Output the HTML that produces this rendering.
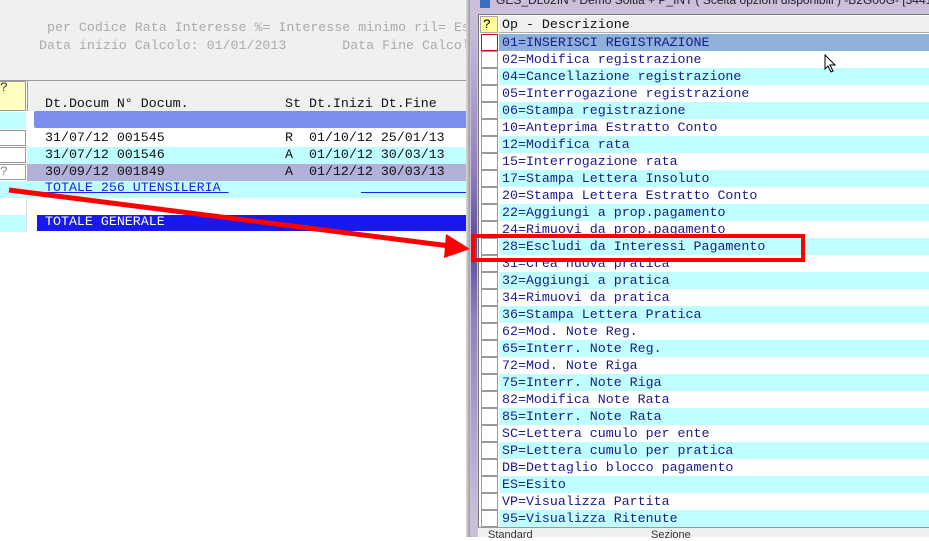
<!DOCTYPE html>
<html><head><meta charset="utf-8"><style>
*{margin:0;padding:0;box-sizing:border-box}
body{width:929px;height:537px;overflow:hidden;background:#fff;position:relative;font-family:"Liberation Mono",monospace;font-size:13.3px}
.a{position:absolute;white-space:pre}
.r{position:absolute;left:479px;width:450px;height:17px}
.r .cb{position:absolute;left:2px;top:0;width:17px;height:17px;background:#fff;border:1px solid #999}
.r .t{position:absolute;left:23px;top:0;line-height:17px;color:#1a1a90;white-space:pre}
.l{position:absolute;white-space:pre;line-height:17px;color:#111}
</style></head><body>
<div class="a" style="left:0;top:0;width:470px;height:80px;background:#f0f0f0"></div>
<div class="a" style="left:47px;top:20px;color:#aaa">per Codice Rata Interesse %= Interesse minimo ril= Es</div>
<div class="a" style="left:39px;top:38px;color:#aaa">Data inizio Calcolo: 01/01/2013       Data Fine Calcol</div>
<div class="a" style="left:0;top:80px;width:470px;height:1px;background:#999"></div>
<div class="a" style="left:0;top:81px;width:26px;height:30px;background:#ffffc0;border:1px solid #999;border-left:none;color:#333;line-height:12px">?</div>
<div class="a" style="left:27px;top:81px;width:443px;height:30px;background:#f0f0f0;border-left:1px solid #999"></div>
<div class="l" style="left:45px;top:95px">Dt.Docum N° Docum.</div>
<div class="l" style="left:285px;top:95px">St</div>
<div class="l" style="left:309px;top:95px">Dt.Inizi Dt.Fine</div>
<div class="a" style="left:0;top:112px;width:26px;height:17px;background:#c0ffff"></div>
<div class="a" style="left:34px;top:111px;width:436px;height:17px;background:#7b8ff0;border-radius:2px"></div>
<div class="a" style="left:27px;top:130px;width:443px;height:17px;background:#fff"></div>
<div class="a" style="left:0;top:130px;width:26px;height:16px;border:1px solid #999;border-left:none"></div>
<div class="l" style="left:45px;top:129px">31/07/12 001545</div>
<div class="l" style="left:285px;top:129px">R</div>
<div class="l" style="left:309px;top:129px">01/10/12 25/01/13</div>
<div class="a" style="left:27px;top:147px;width:443px;height:17px;background:#c0ffff"></div>
<div class="a" style="left:0;top:147px;width:26px;height:16px;border:1px solid #999;border-left:none"></div>
<div class="l" style="left:45px;top:146px">31/07/12 001546</div>
<div class="l" style="left:285px;top:146px">A</div>
<div class="l" style="left:309px;top:146px">01/10/12 30/03/13</div>
<div class="a" style="left:27px;top:164px;width:443px;height:17px;background:#b0b0d8"></div>
<div class="a" style="left:0;top:164px;width:26px;height:16px;border:1px solid #999;border-left:none;color:#888;line-height:14px">?</div>
<div class="l" style="left:45px;top:163px">30/09/12 001849</div>
<div class="l" style="left:285px;top:163px">A</div>
<div class="l" style="left:309px;top:163px">01/12/12 30/03/13</div>
<div class="a" style="left:0;top:181px;width:470px;height:17px;background:#c0ffff"></div>
<div class="l" style="left:45px;top:179px;color:#2020e0;text-decoration:underline">TOTALE 256 UTENSILERIA </div>
<div class="a" style="left:361px;top:192px;width:109px;height:1px;background:#2020e0"></div>
<div class="a" style="left:26px;top:198px;width:1px;height:34px;background:#ddd"></div>
<div class="a" style="left:0;top:215px;width:26px;height:17px;background:#c0ffff"></div>
<div class="a" style="left:37px;top:215px;width:433px;height:16px;background:#1818f0"></div>
<div class="l" style="left:45px;top:213px;color:#fff">TOTALE GENERALE</div>
<div class="a" style="left:466px;top:0;width:4px;height:537px;background:linear-gradient(90deg,#ddd,#999)"></div>
<div class="a" style="left:470px;top:0;width:459px;height:537px;background:#cbbfdc"></div>
<div class="a" style="left:471px;top:20px;width:6px;height:500px;background:linear-gradient(180deg,#cbbfdc,#9080c0 30%,#5a4a9a 45%,#9080c0 60%,#cbbfdc)"></div>
<div class="a" style="left:480px;top:-2px;width:10px;height:10px;background:#3a70c0"></div>
<div class="a" style="left:496px;top:-7px;font-family:'Liberation Sans',sans-serif;font-size:12px;color:#222">GES_DL02IN - Demo Soltia + P_INT ( Scelta opzioni disponibili ) -B2G00G- [3441</div>
<div class="a" style="left:478px;top:14px;width:451px;height:523px;background:#fff;border-left:1px solid #777;border-top:1px solid #777"></div>
<div class="a" style="left:480px;top:16px;width:18px;height:17px;background:#ffff99;border:1px solid #aaa;line-height:15px;padding-left:2px">?</div>
<div class="a" style="left:499px;top:16px;width:430px;height:17px;background:#f0f0f0;border-bottom:1px solid #aaa"></div>
<div class="l" style="left:502px;top:16px">Op - Descrizione</div>
<div id="rows"></div>
<div class="a" style="left:478px;top:527px;width:451px;height:10px;background:#f0f0f0;border-top:1px solid #999"></div>
<div class="a" style="left:488px;top:529px;font-family:'Liberation Sans',sans-serif;font-size:11px;color:#333">Standard</div>
<div class="a" style="left:651px;top:529px;font-family:'Liberation Sans',sans-serif;font-size:11px;color:#333">Sezione</div>
<script>
var items=["01=INSERISCI REGISTRAZIONE","02=Modifica registrazione","04=Cancellazione registrazione","05=Interrogazione registrazione","06=Stampa registrazione","10=Anteprima Estratto Conto","12=Modifica rata","15=Interrogazione rata","17=Stampa Lettera Insoluto","20=Stampa Lettera Estratto Conto","22=Aggiungi a prop.pagamento","24=Rimuovi da prop.pagamento","28=Escludi da Interessi Pagamento","31=Crea nuova pratica","32=Aggiungi a pratica","34=Rimuovi da pratica","36=Stampa Lettera Pratica","62=Mod. Note Reg.","65=Interr. Note Reg.","72=Mod. Note Riga","75=Interr. Note Riga","82=Modifica Note Rata","85=Interr. Note Rata","SC=Lettera cumulo per ente","SP=Lettera cumulo per pratica","DB=Dettaglio blocco pagamento","ES=Esito","VP=Visualizza Partita","95=Visualizza Ritenute"];
var h="";
items.forEach(function(s,i){
 var bg=i==0?"#8fb0d8":(i%2?"#fff":"#c0ffff");
 h+='<div class="r" style="top:'+(34+i*17)+'px"><div class="cb"'+(i==0?' style="border-color:#e00"':'')+'></div><div style="position:absolute;left:20px;top:0;width:430px;height:17px;background:'+bg+'"></div><div class="t">'+s+'</div></div>';
});
document.getElementById("rows").innerHTML=h;
</script>
<svg class="a" style="left:824px;top:54px" width="14" height="20"><path d="M1 1 L1 15 L4 12 L7 18 L9 17 L6 11 L11 11 Z" fill="#fff" stroke="#000"/></svg>
<svg class="a" style="left:0;top:0" width="929" height="537">
<line x1="9" y1="190" x2="450" y2="246" stroke="#f00" stroke-width="5"/>
<polygon points="446,234 470,249 444,258" fill="#f00"/>
<rect x="473" y="236" width="330" height="24" fill="none" stroke="#f00" stroke-width="4"/>
</svg>
</body></html>
